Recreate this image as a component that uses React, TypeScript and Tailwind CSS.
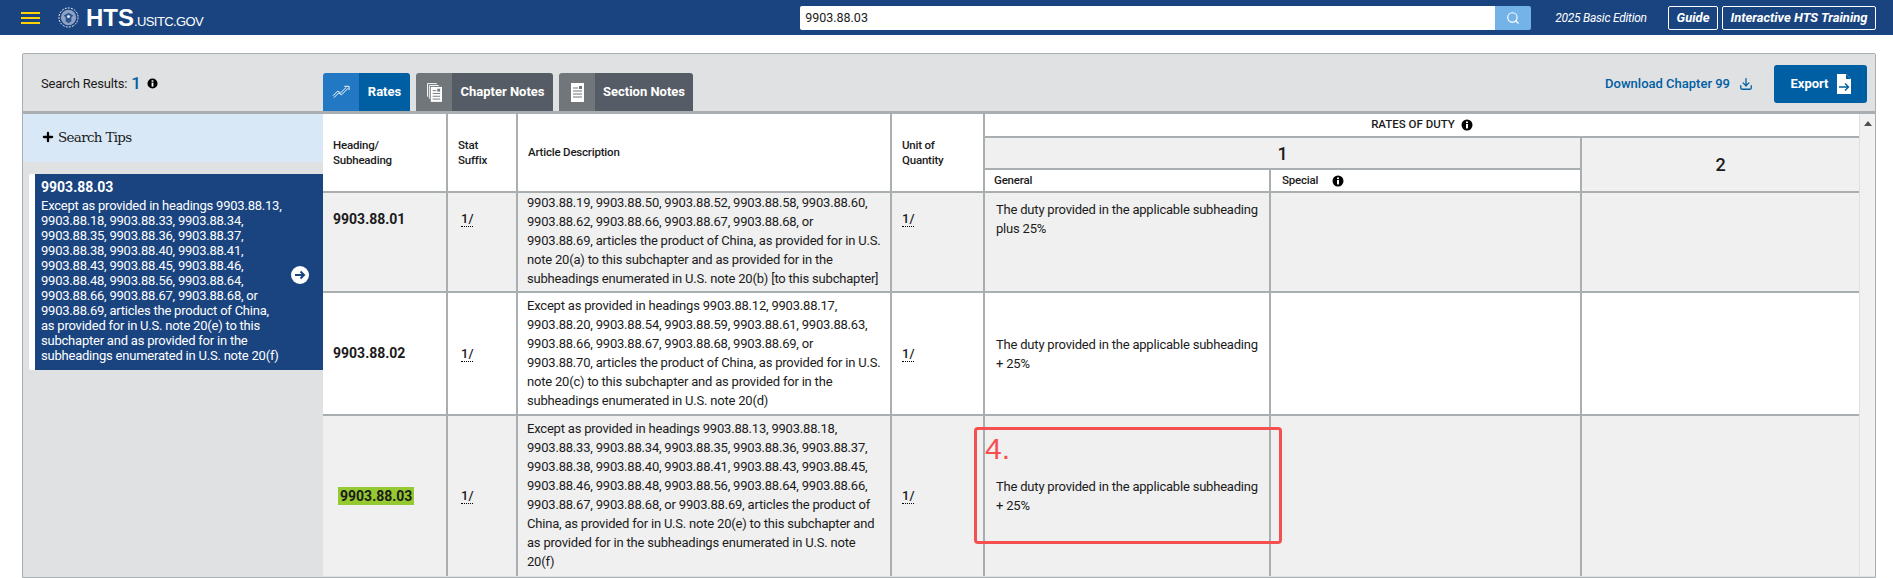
import { Download, Plus, Search } from "lucide-react"

const ui = "font-['Roboto','Open_Sans',sans-serif]"

const rows = [
    {
        heading: "9903.88.01",
        description:
            "9903.88.19, 9903.88.50, 9903.88.52, 9903.88.58, 9903.88.60,\n9903.88.62, 9903.88.66, 9903.88.67, 9903.88.68, or\n9903.88.69, articles the product of China, as provided for in U.S.\nnote 20(a) to this subchapter and as provided for in the\nsubheadings enumerated in U.S. note 20(b) [to this subchapter]",
        general: "The duty provided in the applicable subheading plus 25%",
        shaded: true,
        top: true,
        height: "h-[100px]",
    },
    {
        heading: "9903.88.02",
        description:
            "Except as provided in headings 9903.88.12, 9903.88.17,\n9903.88.20, 9903.88.54, 9903.88.59, 9903.88.61, 9903.88.63,\n9903.88.66, 9903.88.67, 9903.88.68, 9903.88.69, or\n9903.88.70, articles the product of China, as provided for in U.S.\nnote 20(c) to this subchapter and as provided for in the\nsubheadings enumerated in U.S. note 20(d)",
        general: "The duty provided in the applicable subheading + 25%",
        shaded: false,
        top: false,
        height: "h-[123px]",
    },
    {
        heading: "9903.88.03",
        description:
            "Except as provided in headings 9903.88.13, 9903.88.18,\n9903.88.33, 9903.88.34, 9903.88.35, 9903.88.36, 9903.88.37,\n9903.88.38, 9903.88.40, 9903.88.41, 9903.88.43, 9903.88.45,\n9903.88.46, 9903.88.48, 9903.88.56, 9903.88.64, 9903.88.66,\n9903.88.67, 9903.88.68, or 9903.88.69, articles the product of\nChina, as provided for in U.S. note 20(e) to this subchapter and\nas provided for in the subheadings enumerated in U.S. note\n20(f)",
        general: "The duty provided in the applicable subheading + 25%",
        shaded: true,
        top: false,
        height: "h-[161px]",
        current: true,
    },
]

function InfoDot({ className }: { className?: string }) {
    return (
        <svg viewBox="0 0 12 12" className={className}>
            <circle cx="6" cy="6" r="5.5" fill="#000" />
            <rect x="5" y="5" width="2" height="4.4" fill="#fff" />
            <rect x="5" y="2.5" width="2" height="1.6" fill="#fff" />
        </svg>
    )
}

function Seal() {
    return (
        <svg viewBox="0 0 22 22" className="w-[21px] h-[21px]">
            <circle cx="11" cy="11" r="10" fill="none" stroke="#fff" strokeWidth="1" strokeDasharray="2 1.3" />
            <circle cx="11" cy="11" r="8" fill="#8ea3c4" />
            <path d="M6 9l5-3 5 3-2 2v4l-3 2-3-2v-4z" fill="#2f5590" />
            <circle cx="11" cy="10" r="1.6" fill="#dfe6f0" />
        </svg>
    )
}

function DocsIcon() {
    return (
        <svg viewBox="0 0 16 20" className="w-[15px] h-[19px]">
            <path d="M.5.5h10M.5.5v14M2.5 2.5h10M2.5 2.5v14" stroke="#fff" strokeWidth="1" fill="none" />
            <rect x="4" y="4" width="12" height="16" fill="#fff" />
            <path d="M6 8h4M6 11h8M6 14h8M6 17h8" stroke="#71767a" strokeWidth="1" />
            <rect x="11" y="6" width="3" height="3" fill="#71767a" />
        </svg>
    )
}

function DocIcon() {
    return (
        <svg viewBox="0 0 13 19" className="w-[13px] h-[19px]">
            <rect width="13" height="19" fill="#fff" />
            <path d="M2 5h5M2 8h9M2 11h9M2 14h9" stroke="#71767a" strokeWidth="1" />
            <rect x="8" y="3" width="3" height="3" fill="#71767a" />
        </svg>
    )
}

function ChartIcon() {
    return (
        <svg viewBox="0 0 20 14" className="w-[19px] h-[14px]" fill="none" stroke="#fff" strokeWidth="1">
            <path d="M1 11l5-5 3 2 6-6M13 1h5v4M2 13l5-5 3 2 7-7" />
        </svg>
    )
}

function ExportIcon() {
    return (
        <svg viewBox="0 0 14 20" className="w-[14px] h-[20px]">
            <path d="M0 0h9l5 5v15H0z" fill="#fff" />
            <path d="M9 0l5 5H9z" fill="#005ea2" />
            <path d="M2 13h9M8 9.5l3.5 3.5L8 16.5" stroke="#005ea2" strokeWidth="1.4" fill="none" />
        </svg>
    )
}

function Tab({ icon, label, active, width }: { icon: React.ReactNode; label: string; active?: boolean; width: string }) {
    return (
        <div className={`${width} h-[38px] flex rounded-t-[3px] overflow-hidden text-white text-[13px] font-bold`}>
            <div className={`w-9 flex items-center justify-center ${active ? "bg-[#2378c3]" : "bg-[#71767a]"}`}>{icon}</div>
            <div className={`flex-1 flex items-center justify-center ${active ? "bg-[#005ea2]" : "bg-[#565c65]"}`}>{label}</div>
        </div>
    )
}

const cell = "border-2 border-[#a9aeb1] text-[#1b1b1b] p-0"
const headCell = `${cell} bg-white text-[11.5px] font-medium leading-[15px] tracking-[-0.2px] text-left`

export default function App() {
    return (
        <div className={`${ui} h-[578px] overflow-hidden bg-white text-[#1b1b1b]`}>
            {/* Top bar */}
            <header className="h-[35px] bg-[#1a4480] flex items-center pl-[21px] pr-[17px]">
                <div className="w-[19px] flex flex-col gap-[3px]">
                    <span className="h-[2px] bg-[#ffd200]" />
                    <span className="h-[2px] bg-[#ffd200]" />
                    <span className="h-[2px] bg-[#ffd200]" />
                </div>
                <div className="ml-[18px]">
                    <Seal />
                </div>
                <div className="ml-[7px] text-white font-['Liberation_Sans',sans-serif] flex items-baseline">
                    <span className="text-[24px] font-bold leading-none">HTS</span>
                    <span className="text-[13px] tracking-[-0.6px] leading-none">.USITC.GOV</span>
                </div>
                <div className="ml-[597px] w-[695px] h-6 bg-white rounded-l-[2px] text-[12.5px] leading-6 pl-[5px] text-[#1b1b1b]">9903.88.03</div>
                <div className="w-9 h-6 bg-[#73b3e7] rounded-r-[2px] flex items-center justify-center">
                    <Search className="w-[14px] h-[14px] text-white" strokeWidth={2} />
                </div>
                <span className="ml-6 text-[12px] italic text-white tracking-[-0.25px]">2025 Basic Edition</span>
                <span className="ml-auto w-[50px] h-6 border border-white rounded-[2px] text-white text-[13px] italic font-bold flex items-center justify-center">Guide</span>
                <span className="ml-1 w-[154px] h-6 border border-white rounded-[2px] text-white text-[13px] italic font-bold flex items-center justify-center whitespace-nowrap">Interactive HTS Training</span>
            </header>

            {/* Results panel */}
            <div className="mt-[18px] ml-[22px] w-[1854px] h-[525px] bg-[#dfe1e2] border border-[#a9aeb1] rounded-t-[2px]">
                <div className="h-[57px] flex">
                    <div className="w-[300px] pl-[18px] pt-[17px] flex items-center h-[42px] gap-1 text-[13px] tracking-[-0.2px]">
                        <span>Search Results:</span>
                        <span className="text-[17px] font-medium text-[#005ea2]">1</span>
                        <InfoDot className="w-[11px] h-[11px] ml-[2px]" />
                    </div>
                    <div className="flex gap-[6px] items-end">
                        <Tab icon={<ChartIcon />} label="Rates" active width="w-[87px]" />
                        <Tab icon={<DocsIcon />} label="Chapter Notes" width="w-[137px]" />
                        <Tab icon={<DocIcon />} label="Section Notes" width="w-[134px]" />
                    </div>
                    <div className="ml-auto flex items-center h-[49px] pt-[10px] mr-2">
                        <span className="text-[13px] font-medium text-[#005ea2]">Download Chapter 99</span>
                        <Download className="ml-[9px] w-[14px] h-[14px] text-[#005ea2]" strokeWidth={2.2} />
                        <div className="ml-[21px] w-[93px] h-[38px] bg-[#005ea2] rounded-[3px] flex items-center justify-center gap-[8px] text-white text-[13px] font-bold">
                            Export
                            <ExportIcon />
                        </div>
                    </div>
                </div>

                <div className="h-[3px] bg-[#a9aeb1]" />

                <div className="flex">
                    {/* Sidebar */}
                    <aside className="w-[300px] shrink-0">
                        <div className="h-[48px] bg-[#d9e8f6] flex items-center pl-[18px] gap-[3px] pb-[2px]">
                            <Plus className="w-[14px] h-[14px] text-black" strokeWidth={4} />
                            <span className="font-['DejaVu_Serif',serif] text-[13.5px] tracking-[-0.7px]">Search Tips</span>
                        </div>
                        <div className="mt-[12px] ml-[6px] h-[196px] bg-white rounded-l-[2px] pl-[6px]">
                            <div className="h-full bg-[#1a4480] text-white pl-[6px] pt-[6px] flex items-center">
                                <div className="w-[250px] shrink-0 self-start">
                                    <div className="text-[14px] font-bold leading-[15px] mb-[3px]">9903.88.03</div>
                                    <p className="text-[13px] leading-[15px] tracking-[-0.22px] whitespace-pre-line">
                                        {"Except as provided in headings 9903.88.13,\n9903.88.18, 9903.88.33, 9903.88.34,\n9903.88.35, 9903.88.36, 9903.88.37,\n9903.88.38, 9903.88.40, 9903.88.41,\n9903.88.43, 9903.88.45, 9903.88.46,\n9903.88.48, 9903.88.56, 9903.88.64,\n9903.88.66, 9903.88.67, 9903.88.68, or\n9903.88.69, articles the product of China,\nas provided for in U.S. note 20(e) to this\nsubchapter and as provided for in the\nsubheadings enumerated in U.S. note 20(f)"}
                                    </p>
                                </div>
                                <svg viewBox="0 0 18 18" className="w-[18px] h-[18px]">
                                    <circle cx="9" cy="9" r="9" fill="#fff" />
                                    <path d="M4 9h9M9.5 5.5L13 9l-3.5 3.5" stroke="#1a4480" strokeWidth="2" fill="none" />
                                </svg>
                            </div>
                        </div>
                    </aside>

                    {/* Rates table */}
                    <div className="relative flex-1 flex">
                        <table className="w-[1536px] table-fixed border-collapse border-hidden">
                            <colgroup>
                                <col className="w-[124px]" />
                                <col className="w-[70px]" />
                                <col className="w-[374px]" />
                                <col className="w-[93px]" />
                                <col className="w-[286px]" />
                                <col className="w-[311px]" />
                                <col className="w-[278px]" />
                            </colgroup>
                            <thead>
                                <tr className="h-[23px]">
                                    <th rowSpan={3} className={`${headCell} pl-[10px]`}>Heading/<br />Subheading</th>
                                    <th rowSpan={3} className={`${headCell} pl-[10px]`}>Stat<br />Suffix</th>
                                    <th rowSpan={3} className={`${headCell} pl-[10px]`}>Article Description</th>
                                    <th rowSpan={3} className={`${headCell} pl-[10px]`}>Unit of<br />Quantity</th>
                                    <th colSpan={3} className={`${cell} bg-white text-[11.5px] font-medium`}>
                                        <span className="inline-flex items-center gap-[6px]">
                                            RATES OF DUTY
                                            <InfoDot className="w-[12px] h-[12px]" />
                                        </span>
                                    </th>
                                </tr>
                                <tr className="h-[32px]">
                                    <th colSpan={2} className={`${cell} bg-[#f0f0f0] text-[18px] font-medium`}>1</th>
                                    <th rowSpan={2} className={`${cell} bg-[#f0f0f0] text-[18px] font-medium`}>2</th>
                                </tr>
                                <tr className="h-[23px]">
                                    <th className={`${headCell} pl-[9px]`}>General</th>
                                    <th className={`${headCell} pl-[11px]`}>
                                        <span className="inline-flex items-center gap-[14px]">
                                            Special
                                            <InfoDot className="w-[12px] h-[12px]" />
                                        </span>
                                    </th>
                                </tr>
                            </thead>
                            <tbody>
                                {rows.map((row) => {
                                    const bg = row.shaded ? "bg-[#f0f0f0]" : "bg-white"
                                    const align = row.top ? "align-top pt-[16px]" : "align-middle"
                                    return (
                                        <tr key={row.heading} className={`${row.height} ${bg}`}>
                                            <td className={`${cell} ${align} text-[14px] font-bold ${row.current ? "border-l-[7px] border-l-[#94c92f] pl-[9px]" : "pl-[10px]"}`}>
                                                <span className={row.current ? "ml-[6px] bg-[#94c92f] px-[2px] py-[1px]" : ""}>{row.heading}</span>
                                            </td>
                                            <td className={`${cell} ${align} pl-[13px] text-[13px] font-medium`}>
                                                <span className="border-b border-dotted border-black">1/</span>
                                            </td>
                                            <td className={`${cell} align-middle pl-[9px] ${row.top ? "pb-[3px]" : "pb-[2px]"} text-[13px] leading-[19px] tracking-[-0.2px] whitespace-pre-line`}>{row.description}</td>
                                            <td className={`${cell} ${align} pl-[10px] text-[13px] font-medium`}>
                                                <span className="border-b border-dotted border-black">1/</span>
                                            </td>
                                            <td className={`${cell} ${row.top ? "align-top pt-[7px]" : "align-middle"} pl-[11px] pr-[2px] text-[13px] leading-[19px] tracking-[-0.2px]`}>{row.general}</td>
                                            <td className={cell} />
                                            <td className={cell} />
                                        </tr>
                                    )
                                })}
                            </tbody>
                        </table>
                        <div className="flex-1 bg-[#f1f1f1] border-l border-[#dfe1e2] flex justify-center pt-[7px]">
                            <span className="w-0 h-0 border-x-[4px] border-x-transparent border-b-[5px] border-b-[#505050]" />
                        </div>

                        {/* Annotation drawn over the screenshot */}
                        <div className="absolute left-[651px] top-[313px] w-[308px] h-[117px] border-[3px] border-[#f55050] rounded-[4px] pointer-events-none">
                            <span className="absolute left-[8px] top-[3px] text-[#f55050] text-[30px] leading-[32px] font-['Liberation_Sans',sans-serif]">4.</span>
                        </div>
                    </div>
                </div>
            </div>
        </div>
    )
}
